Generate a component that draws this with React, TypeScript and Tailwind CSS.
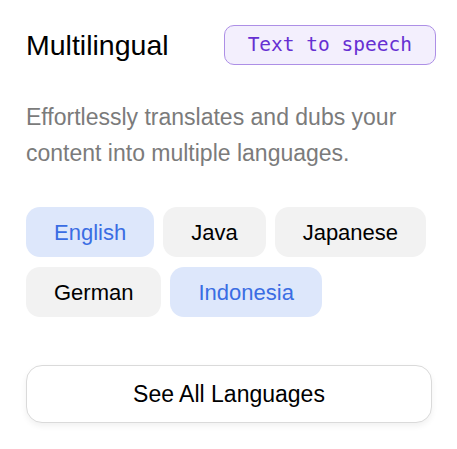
const languages = [
  { name: "English", active: true },
  { name: "Java", active: false },
  { name: "Japanese", active: false },
  { name: "German", active: false },
  { name: "Indonesia", active: true },
];

export default function App() {
  return (
    <div className="w-[457px] h-[449px] bg-white pl-[26px] pr-[25px] pt-[25px] font-['Liberation_Sans',Arial,sans-serif]">
      <div className="flex items-center justify-between -mr-[4px] h-[40px]">
        <h2 className="text-[28.5px] leading-none text-black">Multilingual</h2>
        <span className="h-[40px] flex items-center px-[23px] rounded-[10px] border-[1.5px] border-[#ad8fe6] bg-[#f3effd] text-[#6630d2] text-[19.5px] font-['DejaVu_Sans_Mono',monospace]">
          Text to speech
        </span>
      </div>

      <p className="mt-[34px] text-[23px] leading-[36px] text-[#7b7b7b]">
        Effortlessly translates and dubs your content into multiple languages.
      </p>

      <div className="mt-[36px] flex flex-wrap gap-x-[9px] gap-y-[10px]">
        {languages.map((l) => (
          <span
            key={l.name}
            className={
              l.active
                ? "h-[50px] flex items-center px-[28px] rounded-[14px] bg-[#dde7fb] text-[#3a6de3] text-[22px]"
                : "h-[50px] flex items-center px-[28px] rounded-[14px] bg-[#f2f2f2] text-black text-[22px]"
            }
          >
            {l.name}
          </span>
        ))}
      </div>

      <button className="mt-[48px] w-full h-[58px] rounded-[16px] border-[1.5px] border-[#dadada] bg-white text-[23px] text-black shadow-[0_3px_6px_rgba(0,0,0,0.06)]">
        See All Languages
      </button>
    </div>
  );
}
